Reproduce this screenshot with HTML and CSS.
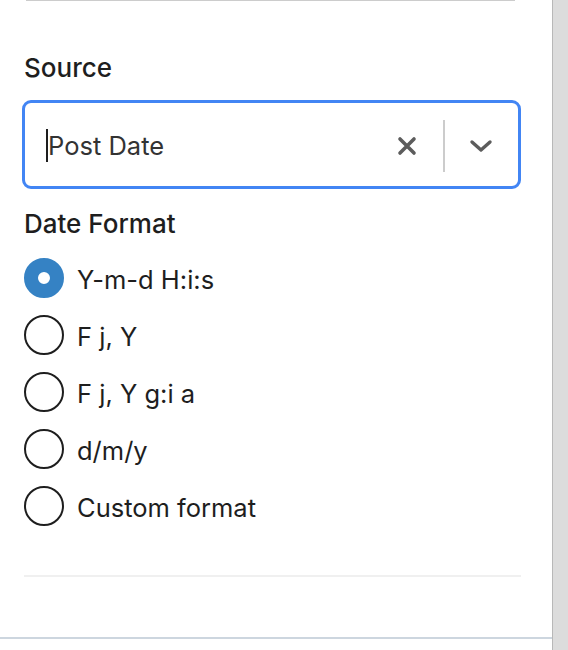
FILE: index.html
```html
<!DOCTYPE html>
<html lang="en">
<head>
    <meta charset="UTF-8">
    <meta name="viewport" content="width=device-width, initial-scale=1.0">
    <title>Date Settings</title>
    <link rel="stylesheet" href="styles.css">
</head>
<body>
    <div class="sidebar">
        <div class="panel">
            <div class="prev-section"></div>

            <label class="field-label">Source</label>
            <div class="select">
                <span class="caret"></span>
                <span class="select-value">Post Date</span>
                <svg class="icon-clear" width="20" height="20" viewBox="0 0 20 20">
                    <path d="M3 3 L17 17 M17 3 L3 17" stroke="#5c5c5c" stroke-width="3.6" stroke-linecap="round" fill="none"/>
                </svg>
                <span class="select-sep"></span>
                <svg class="icon-chevron" width="24" height="14" viewBox="0 0 24 14">
                    <path d="M3 3 L12 11 L21 3" stroke="#5c5c5c" stroke-width="3.4" stroke-linecap="round" stroke-linejoin="round" fill="none"/>
                </svg>
            </div>

            <label class="field-label date-label">Date Format</label>
            <div class="radio-list">
                <div class="radio-row">
                    <span class="radio checked"></span>
                    <span class="radio-text">Y-m-d H:i:s</span>
                </div>
                <div class="radio-row">
                    <span class="radio"></span>
                    <span class="radio-text">F j, Y</span>
                </div>
                <div class="radio-row">
                    <span class="radio"></span>
                    <span class="radio-text">F j, Y g:i a</span>
                </div>
                <div class="radio-row">
                    <span class="radio"></span>
                    <span class="radio-text">d/m/y</span>
                </div>
                <div class="radio-row">
                    <span class="radio"></span>
                    <span class="radio-text">Custom format</span>
                </div>
            </div>

            <div class="divider"></div>
        </div>
        <div class="scroll-track"></div>
    </div>
</body>
</html>
```

FILE: styles.css
```css
body {
    margin: 0;
    font-family: Inter, "Noto Sans", Arial, sans-serif;
    color: #1e1e1e;
    background: #fff;
}

.sidebar {
    display: flex;
    height: 650px;
}

.panel {
    width: 552px;
    height: 639px;
    box-sizing: border-box;
    padding: 0 31px 0 22px;
    border-bottom: 2px solid #cdd6df;
}

.prev-section {
    margin: 0 6px 0 4px;
    border-bottom: 1px solid #cccccc;
}

.field-label {
    display: block;
    margin: 51px 0 0 2px;
    font-size: 26px;
    line-height: 32px;
    font-weight: 500;
}

.select {
    display: flex;
    align-items: center;
    height: 89px;
    box-sizing: border-box;
    margin-top: 16px;
    padding: 2px 25px 0 21px;
    border: 3px solid #4285f4;
    border-radius: 9px;
}

.caret {
    width: 2px;
    height: 33px;
    background: #1e1e1e;
    margin-right: 0;
}

.select-value {
    flex: 1;
    font-size: 25.5px;
    color: #333;
}

.select-sep {
    width: 2px;
    height: 52px;
    margin: 0 24px 0 26px;
    background: #cccccc;
}

.date-label {
    margin-top: 19px;
}

.radio-list {
    display: flex;
    flex-direction: column;
    gap: 17px;
    margin-top: 18px;
}

.radio-row {
    display: flex;
    align-items: center;
    height: 40px;
    padding-left: 2px;
}

.radio {
    width: 40px;
    height: 40px;
    box-sizing: border-box;
    border: 2px solid #1e1e1e;
    border-radius: 50%;
    margin-right: 13px;
}

.radio.checked {
    border: 14px solid #3582c4;
}

.radio-text {
    font-size: 25.5px;
    padding-top: 2px;
}

.divider {
    height: 2px;
    margin: 49px 0 0 2px;
    background: #f0f0f0;
}

.scroll-track {
    flex: 1;
    background: #dcdcdc;
    border-left: 1px solid #b8b8b8;
}
```
